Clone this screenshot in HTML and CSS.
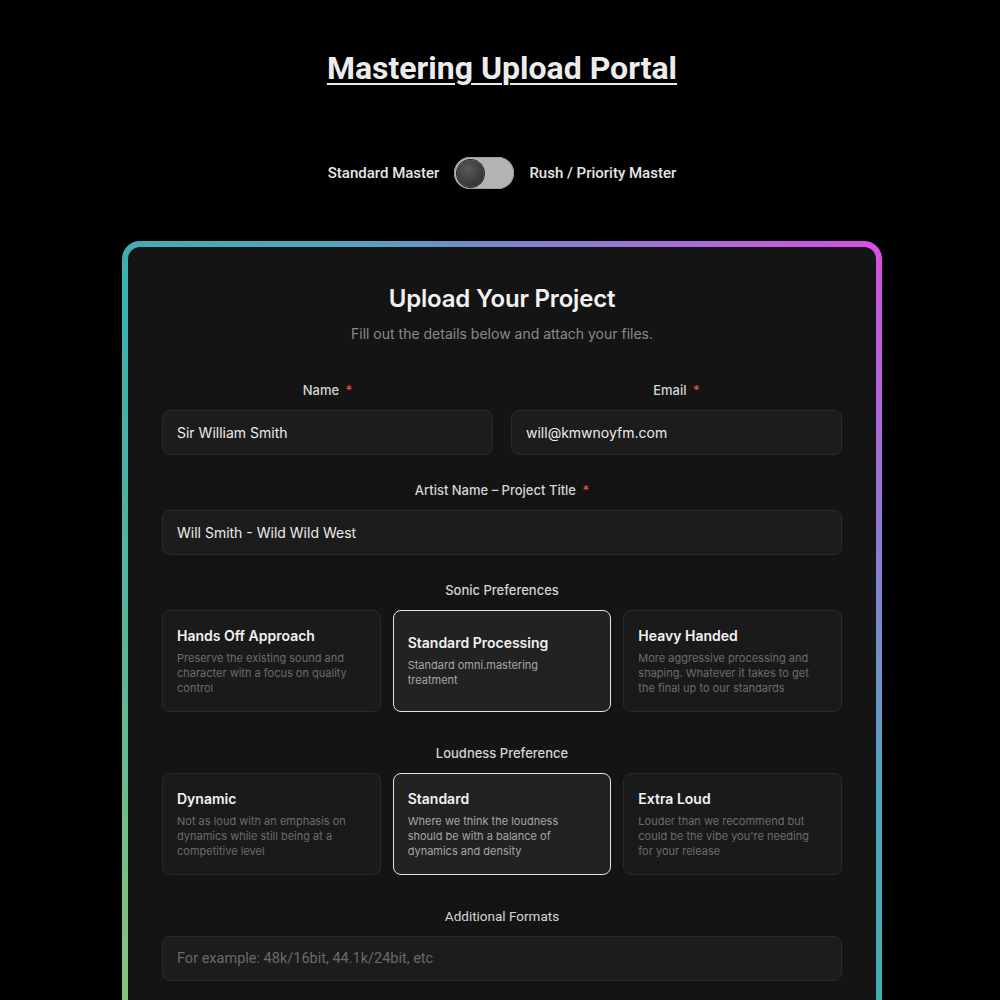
FILE: index.html
```html
<!DOCTYPE html>
<html lang="en">
<head>
<meta charset="utf-8">
<title>Mastering Upload Portal</title>
<link rel="stylesheet" href="styles.css">
</head>
<body>
<main class="page">
  <h1 class="page-title">Mastering Upload Portal</h1>

  <div class="mode-switch">
    <span class="mode-label">Standard Master</span>
    <button class="toggle" type="button" aria-label="Toggle rush master"><span class="knob"></span></button>
    <span class="mode-label">Rush / Priority Master</span>
  </div>

  <div class="frame">
    <form class="panel">
      <h2 class="panel-title">Upload Your Project</h2>
      <p class="panel-sub">Fill out the details below and attach your files.</p>

      <div class="row two">
        <div class="field">
          <label class="label">Name <span class="req">*</span></label>
          <div class="input">Sir William Smith</div>
        </div>
        <div class="field">
          <label class="label">Email <span class="req">*</span></label>
          <div class="input">will@kmwnoyfm.com</div>
        </div>
      </div>

      <div class="field">
        <label class="label">Artist Name – Project Title <span class="req">*</span></label>
        <div class="input">Will Smith - Wild Wild West</div>
      </div>

      <div class="field">
        <label class="label">Sonic Preferences</label>
        <div class="options">
          <div class="option">
            <div class="opt-title">Hands Off Approach</div>
            <div class="opt-desc">Preserve the existing sound and character with a focus on quality control</div>
          </div>
          <div class="option selected">
            <div class="opt-title">Standard Processing</div>
            <div class="opt-desc">Standard omni.mastering treatment</div>
          </div>
          <div class="option">
            <div class="opt-title">Heavy Handed</div>
            <div class="opt-desc">More aggressive processing and shaping. Whatever it takes to get the final up to our standards</div>
          </div>
        </div>
      </div>

      <div class="field wide-gap">
        <label class="label">Loudness Preference</label>
        <div class="options">
          <div class="option">
            <div class="opt-title">Dynamic</div>
            <div class="opt-desc">Not as loud with an emphasis on dynamics while still being at a competitive level</div>
          </div>
          <div class="option selected">
            <div class="opt-title">Standard</div>
            <div class="opt-desc">Where we think the loudness should be with a balance of dynamics and density</div>
          </div>
          <div class="option">
            <div class="opt-title">Extra Loud</div>
            <div class="opt-desc">Louder than we recommend but could be the vibe you're needing for your release</div>
          </div>
        </div>
      </div>

      <div class="field wide-gap">
        <label class="label alt">Additional Formats</label>
        <div class="input placeholder">For example: 48k/16bit, 44.1k/24bit, etc</div>
      </div>

      <div class="field">
        <label class="label">Notes</label>
        <div class="input tall placeholder">Anything else we should know?</div>
      </div>

      <div class="field">
        <label class="label">Files <span class="req">*</span></label>
        <div class="dropzone">Drag &amp; drop your files here or click to browse</div>
      </div>

      <button class="submit" type="button">Submit Project</button>
    </form>
  </div>
</main>
</body>
</html>
```

FILE: styles.css
```css
* { box-sizing: border-box; }

html, body {
  margin: 0;
  padding: 0;
  background: #000;
}

body {
  font-family: Inter, "Noto Sans", sans-serif;
  color: #e8e8e8;
  padding-left: 4px;
}

.page {
  width: 760px;
  margin: 0 auto;
  padding-top: 48px;
  display: flex;
  flex-direction: column;
  align-items: center;
}

.page-title {
  margin: 0;
  font-family: Roboto, "Liberation Sans", sans-serif;
  font-weight: 700;
  font-size: 32px;
  line-height: 40px;
  color: #ececec;
  text-decoration: underline;
  text-decoration-thickness: 2px;
  text-underline-offset: 4px;
}

.mode-switch {
  margin-top: 69px;
  display: flex;
  align-items: center;
  gap: 15px;
}

.mode-label {
  font-family: Roboto, "Liberation Sans", sans-serif;
  font-size: 15px;
  font-weight: 500;
  color: #e6e6e6;
}

.toggle {
  width: 60px;
  height: 32px;
  border-radius: 16px;
  border: none;
  padding: 3px;
  background: #b4b4b4;
  display: flex;
  align-items: center;
  box-shadow: inset 0 0 0 1px #9e9e9e;
}

.knob {
  width: 27px;
  height: 27px;
  border-radius: 50%;
  background: radial-gradient(circle at 40% 35%, #5a5a5a 0%, #3a3a3a 60%, #2a2a2a 100%);
  box-shadow: 0 0 0 1px #2a2a2a;
}

.frame {
  margin-top: 52px;
  width: 760px;
  padding: 6px;
  border-radius: 18px;
  background: linear-gradient(225deg, #dc4ce8 0%, #b066dc 8%, #7d86cc 18%, #4ea6bc 27%, #3cb0ae 40%, #56b49a 55%, #8cc47a 75%, #a0c870 100%) no-repeat;
  background-size: 100% 1300px;
}

.panel {
  background: #141414;
  border-radius: 12px;
  padding: 37px 34px 40px;
  display: flex;
  flex-direction: column;
  gap: 27px;
}

.panel-title {
  margin: 0;
  text-align: center;
  font-size: 24px;
  line-height: 30px;
  font-weight: 600;
  color: #f2f2f2;
  letter-spacing: -0.2px;
}

.panel-sub {
  margin: -15px 0 13px;
  text-align: center;
  font-size: 14px;
  line-height: 16px;
  color: #8a8a8a;
}

.row.two {
  display: grid;
  grid-template-columns: 1fr 1fr;
  gap: 18px;
}

.field {
  display: flex;
  flex-direction: column;
  gap: 12px;
}

.field.wide-gap {
  margin-top: 6px;
}

.label {
  text-align: center;
  font-size: 13px;
  line-height: 16px;
  font-weight: 500;
  color: #d4d4d4;
}

.label.alt {
  font-family: Roboto, "Liberation Sans", sans-serif;
  font-size: 13.5px;
  font-weight: 400;
}

.req {
  color: #e0524f;
  margin-left: 3px;
}

.input {
  height: 45px;
  border-radius: 8px;
  background: #1c1c1c;
  border: 1px solid #2b2b2b;
  padding: 0 14px;
  display: flex;
  align-items: center;
  font-size: 14px;
  color: #ececec;
}

.input.placeholder {
  font-family: Roboto, "Liberation Sans", sans-serif;
  font-size: 14.5px;
  color: #6a6a6a;
}

.input.tall {
  height: 110px;
  align-items: flex-start;
  padding-top: 13px;
}

.options {
  display: grid;
  grid-template-columns: repeat(3, 1fr);
  gap: 12px;
}

.option {
  height: 102px;
  border-radius: 8px;
  background: #1a1a1a;
  border: 1px solid #2a2a2a;
  padding: 0 23px 0 14px;
  display: flex;
  flex-direction: column;
  justify-content: center;
}

.option.selected {
  background: #222222;
  border-color: #e6e6e6;
}

.opt-title {
  font-size: 14px;
  line-height: 18px;
  font-weight: 600;
  color: #f2f2f2;
  margin-bottom: 6px;
}

.opt-desc {
  font-size: 11px;
  line-height: 15px;
  color: #6c6c6c;
}

.option.selected .opt-desc {
  color: #a6a6a6;
}

.dropzone {
  height: 140px;
  border-radius: 10px;
  border: 1px dashed #3a3a3a;
  background: #181818;
  display: flex;
  align-items: center;
  justify-content: center;
  font-size: 14px;
  color: #7a7a7a;
}

.submit {
  height: 48px;
  border-radius: 8px;
  border: none;
  background: #f0f0f0;
  color: #111;
  font-family: Inter, sans-serif;
  font-size: 15px;
  font-weight: 600;
}
```
